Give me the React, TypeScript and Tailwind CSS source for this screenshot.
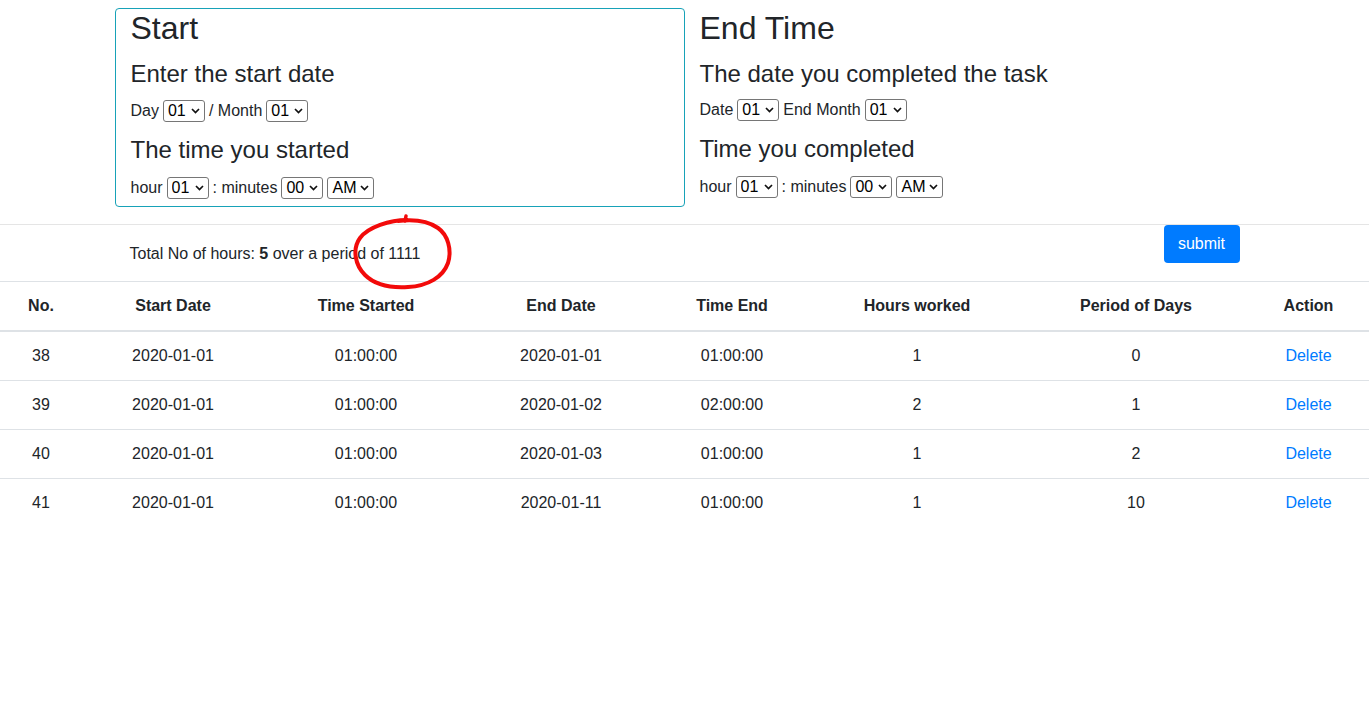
import { useState } from 'react'

const pad = (n: number) => String(n).padStart(2, '0')
const range = (from: number, to: number) =>
  Array.from({ length: to - from + 1 }, (_, i) => pad(from + i))

const days = range(1, 31)
const months = range(1, 12)
const hours = range(1, 12)
const minutes = range(0, 59)

function Pick({ options, width }: { options: string[]; width: string }) {
  const [value, setValue] = useState(options[0])
  return (
    <span className="relative inline-flex">
      <select
        value={value}
        onChange={(e) => setValue(e.target.value)}
        className={`${width} h-[22px] appearance-none rounded-[3px] border border-[#767676] bg-white pl-[4px] text-[16px] leading-[20px] text-black outline-none`}
      >
        {options.map((o) => (
          <option key={o}>{o}</option>
        ))}
      </select>
      <svg
        className="pointer-events-none absolute right-[5px] top-[8px]"
        width="9"
        height="6"
        viewBox="0 0 9 6"
      >
        <path d="M1 1l3.5 3.5L8 1" stroke="#111" strokeWidth="1.7" fill="none" />
      </svg>
    </span>
  )
}

const rows = [
  { no: 38, start: '2020-01-01', started: '01:00:00', end: '2020-01-01', ended: '01:00:00', hours: 1, days: 0 },
  { no: 39, start: '2020-01-01', started: '01:00:00', end: '2020-01-02', ended: '02:00:00', hours: 2, days: 1 },
  { no: 40, start: '2020-01-01', started: '01:00:00', end: '2020-01-03', ended: '01:00:00', hours: 1, days: 2 },
  { no: 41, start: '2020-01-01', started: '01:00:00', end: '2020-01-11', ended: '01:00:00', hours: 1, days: 10 },
]

const headers = ['No.', 'Start Date', 'Time Started', 'End Date', 'Time End', 'Hours worked', 'Period of Days', 'Action']
const widths = ['w-[82px]', 'w-[182px]', 'w-[204px]', 'w-[186px]', 'w-[156px]', 'w-[214px]', 'w-[224px]', 'w-[121px]']

export default function App() {
  const [list, setList] = useState(rows)

  return (
    <div className="relative min-h-[705px] bg-white pt-2 font-['Liberation_Sans',Arial,sans-serif] text-[16px] text-[#212529]">
      <div className="mx-auto flex w-[1140px]">
        {/* start column */}
        <div className="w-1/2 rounded-[4px] border border-[#17a2b8] px-[15px] pb-[6px]">
          <h2 className="mb-[12px] text-[32px] font-medium leading-[38px]">Start</h2>
          <h4 className="mb-[11px] text-[24px] leading-[29px]">Enter the start date</h4>
          <div className="mb-[12px] flex h-6 items-center gap-[4px]">
            <span>Day</span>
            <Pick options={days} width="w-[42px]" />
            <span>/ Month</span>
            <Pick options={months} width="w-[42px]" />
          </div>
          <h4 className="mb-[12px] text-[24px] leading-[29px]">The time you started</h4>
          <div className="flex h-6 items-center gap-[4px]">
            <span>hour</span>
            <Pick options={hours} width="w-[42px]" />
            <span>: minutes</span>
            <Pick options={minutes} width="w-[42px]" />
            <Pick options={['AM', 'PM']} width="w-[47px]" />
          </div>
        </div>

        {/* end column */}
        <div className="w-1/2 px-[15px] pt-px">
          <h2 className="mb-[12px] text-[32px] font-medium leading-[38px]">End Time</h2>
          <h4 className="mb-[10px] text-[24px] leading-[29px]">The date you completed the task</h4>
          <div className="mb-[12px] flex h-6 items-center gap-[4px]">
            <span>Date</span>
            <Pick options={days} width="w-[42px]" />
            <span>End Month</span>
            <Pick options={months} width="w-[42px]" />
          </div>
          <h4 className="mb-[12px] text-[24px] leading-[29px]">Time you completed</h4>
          <div className="flex h-6 items-center gap-[4px]">
            <span>hour</span>
            <Pick options={hours} width="w-[42px]" />
            <span>: minutes</span>
            <Pick options={minutes} width="w-[42px]" />
            <Pick options={['AM', 'PM']} width="w-[47px]" />
          </div>
        </div>
      </div>

      <hr className="mt-[17px] border-t border-[#e5e5e5]" />

      <div className="mx-auto flex h-[56px] w-[1140px] items-start justify-between px-[15px]">
        <p className="mt-[17px] leading-6">
          Total No of hours: <b>5</b> over a period of 1111
        </p>
        <button className="h-[38px] w-[76px] rounded-[4px] bg-[#007bff] text-[16px] text-white">submit</button>
      </div>

      <table className="w-full table-fixed border-collapse text-center">
        <colgroup>
          {widths.map((w) => (
            <col key={w} className={w} />
          ))}
        </colgroup>
        <thead>
          <tr>
            {headers.map((h) => (
              <th key={h} className="border-t border-b-2 border-[#dee2e6] p-3 font-bold leading-6">
                {h}
              </th>
            ))}
          </tr>
        </thead>
        <tbody>
          {list.map((r) => (
            <tr key={r.no}>
              <td className="border-t border-[#dee2e6] p-3 leading-6">{r.no}</td>
              <td className="border-t border-[#dee2e6] p-3 leading-6">{r.start}</td>
              <td className="border-t border-[#dee2e6] p-3 leading-6">{r.started}</td>
              <td className="border-t border-[#dee2e6] p-3 leading-6">{r.end}</td>
              <td className="border-t border-[#dee2e6] p-3 leading-6">{r.ended}</td>
              <td className="border-t border-[#dee2e6] p-3 leading-6">{r.hours}</td>
              <td className="border-t border-[#dee2e6] p-3 leading-6">{r.days}</td>
              <td className="border-t border-[#dee2e6] p-3 leading-6">
                <a
                  href="#"
                  className="text-[#007bff]"
                  onClick={(e) => {
                    e.preventDefault()
                    setList(list.filter((x) => x.no !== r.no))
                  }}
                >
                  Delete
                </a>
              </td>
            </tr>
          ))}
        </tbody>
      </table>

      {/* hand-drawn red annotation */}
      <svg className="pointer-events-none absolute left-[340px] top-[205px]" width="130" height="95" viewBox="0 0 130 95">
        <path
          d="M67 15 C50 15 28 22 20 33 C12 44 15 60 25 70 C35 80 52 83 68 82 C88 81 103 72 108 58 C112 45 108 30 98 23 C88 16 75 14 58 16"
          stroke="#f20a0a"
          strokeWidth="4"
          fill="none"
          strokeLinecap="round"
          strokeLinejoin="round"
        />
        <path d="M65 16 L66 11" stroke="#f20a0a" strokeWidth="3.5" strokeLinecap="round" />
      </svg>
    </div>
  )
}
